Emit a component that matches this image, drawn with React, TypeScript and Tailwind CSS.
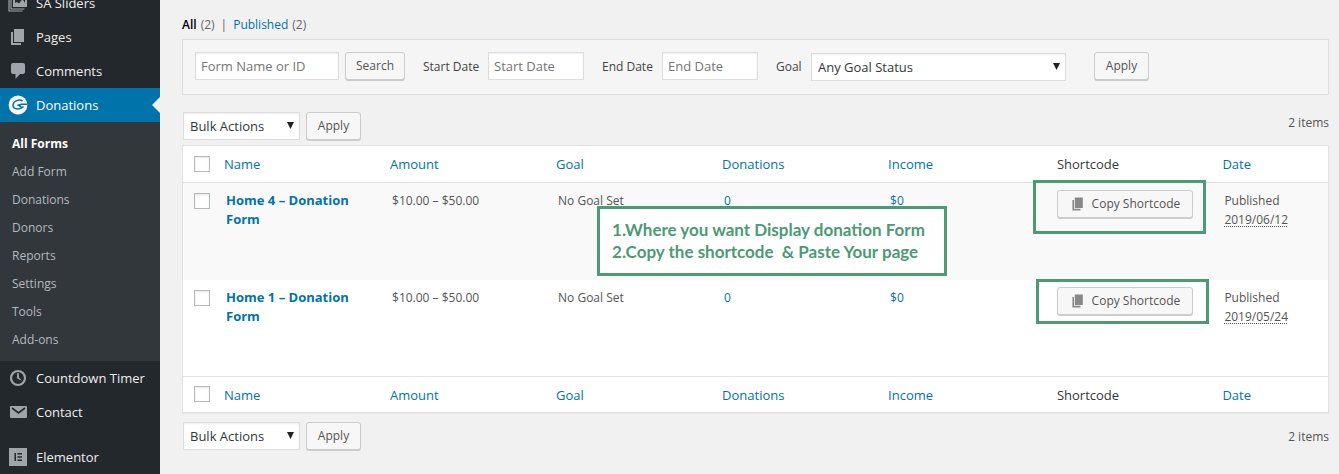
import type { ReactNode } from "react";

function PagesIcon({ className = "size-5" }: { className?: string }) {
  return (
    <svg viewBox="0 0 20 20" className={className} fill="currentColor" aria-hidden="true">
      <path d="M6 15V2h10v13H6zm-1 1h8v2H3V5h2v11z" />
    </svg>
  );
}

function SlidersIcon() {
  return (
    <svg viewBox="0 0 20 20" className="size-5" aria-hidden="true">
      <path d="M1 4.500v13.500h13.500M3 2.500v13.500h13.500" fill="none" stroke="currentColor" strokeWidth="1.200" />
      <path d="M5 0h14v14H5z" fill="currentColor" />
      <path d="M7 2h10v8l-2.500-4-3.500 4.500L9 9l-2 1z" fill="#23282d" />
    </svg>
  );
}

function CommentsIcon() {
  return (
    <svg viewBox="0 0 20 20" className="size-5" fill="currentColor" aria-hidden="true">
      <path d="M5 2h10c1.100 0 2 .9 2 2v7c0 1.100-.9 2-2 2h-3l-4.500 5v-5H5c-1.100 0-2-.9-2-2V4c0-1.100.9-2 2-2z" />
    </svg>
  );
}

function GiveIcon() {
  return (
    <svg viewBox="0 0 20 20" className="size-5" aria-hidden="true">
      <circle cx="10" cy="10" r="9.400" fill="#fff" />
      <path
        d="M14.500 6.200C11.500 3.800 5.200 5.800 5 10.200c0 3.900 6 5.300 10.600 1.500"
        fill="none"
        stroke="#0073aa"
        strokeWidth="1.500"
      />
      <path d="M8.300 10c2.700-1.500 6.200-1.900 10.900-1.400v1.500c-3-.3-5.200-.2-7 .3l2.200 1.500-1.200.9z" fill="#0073aa" />
    </svg>
  );
}

function ClockIcon() {
  return (
    <svg viewBox="0 0 20 20" className="size-5" aria-hidden="true">
      <circle cx="10" cy="10" r="7" fill="none" stroke="currentColor" strokeWidth="2.200" />
      <path d="M9.200 5h1.500l.3 4.600 3.200 3.300-4.500-2.100c-.6-.3-.8-.7-.8-1.100z" fill="currentColor" />
    </svg>
  );
}

function EmailIcon() {
  return (
    <svg viewBox="0 0 20 20" className="size-5" aria-hidden="true">
      <rect x="2" y="4" width="17" height="12" rx="1" fill="currentColor" />
      <path d="M4 6l6.500 5L17 6" fill="none" stroke="#23282d" strokeWidth="1.600" />
    </svg>
  );
}

function ElementorIcon() {
  return (
    <svg viewBox="0 0 20 20" className="size-5" aria-hidden="true">
      <path d="M1 1h18v18H1z" fill="currentColor" />
      <path d="M6.500 6H8v8H6.500zM9.500 6H14v1.500H9.500zM9.500 9.200H14v1.500H9.500zM9.500 12.500H14V14H9.500z" fill="#23282d" />
    </svg>
  );
}

function MenuItem({ icon, label, active = false }: { icon: ReactNode; label: string; active?: boolean }) {
  return (
    <a
      href="#"
      className={
        active
          ? "relative flex h-[34px] items-center gap-2 bg-[#0073aa] pl-2 text-[13px] text-white"
          : "flex h-[34px] items-center gap-2 pl-2 text-[13px] text-[#eeeeee]"
      }
    >
      <span className={active ? "text-white" : "text-[#a0a5aa]"}>{icon}</span>
      <span className="pt-0.5">{label}</span>
      {active && (
        <span className="absolute top-[9px] right-0 border-y-8 border-r-8 border-y-transparent border-r-[#f1f1f1]" />
      )}
    </a>
  );
}

const submenu = ["All Forms", "Add Form", "Donations", "Donors", "Reports", "Settings", "Tools", "Add-ons"];

function Sidebar() {
  return (
    <nav className="-mt-3.5 w-40 shrink-0 bg-[#23282d]">
      <MenuItem icon={<SlidersIcon />} label="SA Sliders" />
      <MenuItem icon={<PagesIcon />} label="Pages" />
      <MenuItem icon={<CommentsIcon />} label="Comments" />
      <MenuItem icon={<GiveIcon />} label="Donations" active />
      <ul className="bg-[#32373c] pt-2 pb-[7px] text-xs">
        {submenu.map((label, i) => (
          <li key={label}>
            <a
              href="#"
              className={
                i === 0
                  ? "flex h-7 items-center pl-3 font-bold text-white"
                  : "flex h-7 items-center pl-3 text-[#b4b9be]"
              }
            >
              {label}
            </a>
          </li>
        ))}
      </ul>
      <MenuItem icon={<ClockIcon />} label="Countdown Timer" />
      <MenuItem icon={<EmailIcon />} label="Contact" />
      <div className="mt-[11px]">
        <MenuItem icon={<ElementorIcon />} label="Elementor" />
      </div>
    </nav>
  );
}

function Button({ className, children }: { className: string; children: ReactNode }) {
  return (
    <button
      type="button"
      className={`${className} flex h-7 items-center justify-center rounded-[3px] border border-[#cccccc] bg-[#f7f7f7] text-xs text-[#555555] shadow-[0_1px_0_#cccccc]`}
    >
      {children}
    </button>
  );
}

function Select({ label, option, wide = false }: { label: string; option: string; wide?: boolean }) {
  return (
    <div className={wide ? "relative w-[255px]" : "relative w-[117px]"}>
      <select
        aria-label={label}
        className="h-7 w-full appearance-none border border-[#dddddd] bg-white pt-0.5 pl-1.5 text-[13px] text-[#32373c] shadow-[inset_0_1px_2px_rgba(0,0,0,0.07)]"
      >
        <option>{option}</option>
      </select>
      <svg viewBox="0 0 7 7" className="pointer-events-none absolute top-2.5 right-1.5 size-[7px]" aria-hidden="true">
        <path d="M0 0h7L3.500 7z" fill="#222" />
      </svg>
    </div>
  );
}

const inputClass =
  "h-7 border border-[#dddddd] bg-white px-[5px] text-[13px] text-[#32373c] shadow-[inset_0_1px_2px_rgba(0,0,0,0.07)] placeholder:text-[#757575]";

function Filters() {
  return (
    <form className="mt-1 flex h-14 items-start border border-[#dedede] bg-[#f5f5f5] pt-3 pl-3 text-xs text-[#444444]">
      <input aria-label="Form Name or ID" placeholder="Form Name or ID" className={`${inputClass} mr-1.5 w-36`} />
      <Button className="w-[60px]">Search</Button>
      <label htmlFor="start" className="ml-[18px] w-[65px] pt-px leading-7 whitespace-nowrap">
        Start Date
      </label>
      <input id="start" placeholder="Start Date" className={`${inputClass} w-24`} />
      <label htmlFor="end" className="ml-[18px] w-[60px] pt-px leading-7 whitespace-nowrap">
        End Date
      </label>
      <input id="end" placeholder="End Date" className={`${inputClass} w-24`} />
      <span className="ml-[18px] w-[35px] pt-px leading-7">Goal</span>
      <div className="pt-px">
        <Select label="Goal" option="Any Goal Status" wide />
      </div>
      <div className="ml-7">
        <Button className="w-[55px]">Apply</Button>
      </div>
    </form>
  );
}

function BulkActions({ bottom = false }: { bottom?: boolean }) {
  return (
    <div className="flex items-start gap-1.5 pl-px text-xs text-[#555555]">
      <Select label="Bulk Actions" option="Bulk Actions" />
      <Button className="w-[55px]">Apply</Button>
      <span className={bottom ? "ml-auto pt-px leading-7" : "ml-auto pt-px leading-5"}>2 items</span>
    </div>
  );
}

function Check({ label }: { label: string }) {
  return (
    <input
      type="checkbox"
      aria-label={label}
      className="block size-4 appearance-none border border-[#b4b9be] bg-white shadow-[inset_0_1px_2px_rgba(0,0,0,0.1)]"
    />
  );
}

const columns = ["Name", "Amount", "Goal", "Donations", "Income", "Shortcode", "Date"];

function HeadingRow() {
  return (
    <tr className="h-9">
      <td className="pl-[11px]">
        <Check label="Select all" />
      </td>
      {columns.map((name) => (
        <th key={name} scope="col" className="pt-0.5 pl-2.5 text-left text-[13px] font-normal text-[#32373c]">
          {name === "Shortcode" ? (
            name
          ) : (
            <a href="#" className="text-[#0073aa]">
              {name}
            </a>
          )}
        </th>
      ))}
    </tr>
  );
}

function Callout() {
  return (
    <div className="absolute top-[15px] left-[39px] z-10 w-[350px] border-[3px] border-[#4c9a76] bg-white px-3 py-2.5 font-['Lato',sans-serif] text-[17px] leading-[22px] font-bold whitespace-pre text-[#4c9a76]">
      <p>1.Where you want Display donation Form</p>
      <p>{"2.Copy the shortcode  & Paste Your page"}</p>
    </div>
  );
}

const rows = [
  { name: "Home 4 – Donation Form", date: "2019/06/12" },
  { name: "Home 1 – Donation Form", date: "2019/05/24" },
];

function FormsTable() {
  return (
    <div className="mt-[5px] mb-[9px] border border-[#e1e1e1] bg-white shadow-[0_1px_1px_rgba(0,0,0,0.04)]">
      <table className="w-full table-fixed border-collapse text-xs leading-[19px] text-[#555555]">
        <colgroup>
          <col className="w-[31px]" />
          <col className="w-[14.5%]" />
          <col className="w-[14.5%]" />
          <col className="w-[14.5%]" />
          <col className="w-[14.5%]" />
          <col className="w-[14.75%]" />
          <col className="w-[14.45%]" />
          <col />
        </colgroup>
        <thead className="border-b border-[#e1e1e1]">
          <HeadingRow />
        </thead>
        <tbody>
          {rows.map((row, i) => (
            <tr key={row.name} className={i === 0 ? "h-[98px] bg-[#f9f9f9] align-top" : "h-24 align-top"}>
              <td className="pt-2.5 pl-[11px]">
                <Check label={`Select ${row.name}`} />
              </td>
              <td className="pt-2 pr-5 pl-3">
                <a href="#" className="block text-[13px] leading-[19px] font-bold text-[#0073aa]">
                  {row.name}
                </a>
              </td>
              <td className="pt-2 pl-3">$10.00 – $50.00</td>
              <td className="pt-2 pl-3">
                <div className="relative">
                  No Goal Set
                  {i === 0 && <Callout />}
                </div>
              </td>
              <td className="pt-2 pl-3">
                <a href="#" className="text-[#0073aa]">
                  0
                </a>
              </td>
              <td className="pt-2 pl-3">
                <a href="#" className="text-[#0073aa]">
                  $0
                </a>
              </td>
              <td className="pt-[7px] pl-2.5">
                <div className="relative w-[136px]">
                  <Button className="w-full">
                    <PagesIcon className="mr-1.5 size-4 text-[#888888]" />
                    <span className="whitespace-nowrap">Copy Shortcode</span>
                  </Button>
                  <span
                    className={
                      i === 0
                        ? "pointer-events-none absolute -top-2.5 -left-6 h-[54px] w-[173px] border-[3px] border-[#4c9a76]"
                        : "pointer-events-none absolute -top-2 -left-[21px] h-[45px] w-[173px] border-[3px] border-[#4c9a76]"
                    }
                  />
                </div>
              </td>
              <td className="pt-2 pl-3">
                Published
                <br />
                <abbr title={row.date} className="underline decoration-dotted underline-offset-2">
                  {row.date}
                </abbr>
              </td>
            </tr>
          ))}
        </tbody>
        <tfoot className="border-t border-[#e1e1e1]">
          <HeadingRow />
        </tfoot>
      </table>
    </div>
  );
}

export default function App() {
  return (
    <div className="flex min-h-screen overflow-hidden bg-[#f1f1f1] font-['Open_Sans','Noto_Sans',sans-serif]">
      <Sidebar />
      <main className="min-w-0 grow pt-3.5 pr-2.5 pl-[22px]">
        <div className="flex h-[21px] items-center gap-1 text-xs text-[#666666]">
          <a href="#" className="font-semibold text-black">
            All
          </a>
          <span>(2)</span>
          <span className="px-0.5">|</span>
          <a href="#" className="text-[#0073aa]">
            Published
          </a>
          <span>(2)</span>
        </div>
        <Filters />
        <div className="mt-[17px]">
          <BulkActions />
        </div>
        <FormsTable />
        <BulkActions bottom />
      </main>
    </div>
  );
}
